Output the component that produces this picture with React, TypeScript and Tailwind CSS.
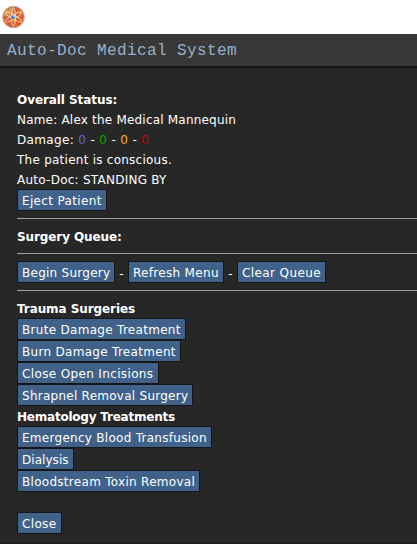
const trauma = [
  { label: "Brute Damage Treatment", size: "w-[169px] tracking-[0.3px]" },
  { label: "Burn Damage Treatment", size: "w-[164px] tracking-[0.3px]" },
  { label: "Close Open Incisions", size: "w-[142px] tracking-[0.36px]" },
  { label: "Shrapnel Removal Surgery", size: "w-[176px] tracking-[0.26px]" },
];

const hematology = [
  { label: "Emergency Blood Transfusion", size: "w-[195px] tracking-[0.28px]" },
  { label: "Dialysis", size: "w-[57px] tracking-[0.05px]" },
  { label: "Bloodstream Toxin Removal", size: "w-[183px] tracking-[0.29px]" },
];

const LinkButton = ({ label, size }: { label: string; size: string }) => (
  <button
    className={`${size} block h-[22px] shrink-0 whitespace-nowrap border border-[#161616] bg-[#40628a] pl-1 text-left leading-[22px] text-white`}
  >
    <span className="block h-5">{label}</span>
  </button>
);

const Logo = () => (
  <svg className="h-6 w-6" viewBox="0 0 24 24" fill="none">
    <circle cx="11.5" cy="12" r="10.8" fill="#d8602e" stroke="#c3b4aa" strokeWidth="1" />
    <path d="M1.6 11A10 10 0 0 1 11.5 2V12Z" fill="#d3935a" />
    <g stroke="#f3d3c0" strokeWidth="0.9">
      <ellipse cx="11.5" cy="12" rx="2" ry="9.2" />
      <ellipse cx="11.5" cy="12" rx="2" ry="9.2" transform="rotate(60 11.5 12)" />
      <ellipse cx="11.5" cy="12" rx="2" ry="9.2" transform="rotate(120 11.5 12)" />
    </g>
    <circle cx="11" cy="12.3" r="2" fill="#3f7fdc" />
    <circle cx="12.3" cy="11" r="1.1" fill="#d9ecff" />
    <circle cx="4.5" cy="7.3" r="1.2" fill="#f3cf22" />
    <circle cx="18.8" cy="7.5" r="1.2" fill="#f3cf22" />
    <circle cx="12.8" cy="15.7" r="1.2" fill="#f3cf22" />
  </svg>
);

const App = () => {
  return (
    <div className="flex h-[544px] w-[417px] flex-col overflow-hidden border-b border-[#241c1e] bg-[#272727] font-['DejaVu_Sans',sans-serif] text-xs leading-[22px] text-white">
      <div className="h-[34px] shrink-0 bg-white pl-0.5 pt-[5px]">
        <Logo />
      </div>
      <header className="h-[34px] shrink-0 border-b-2 border-[#161616] bg-[#383838] pl-[7px]">
        <h1 className="whitespace-nowrap font-['Courier_New','Liberation_Mono',monospace] text-base leading-[34px] tracking-[0.4px] text-[#98b0c8]">
          Auto-Doc Medical System
        </h1>
      </header>
      <main className="pl-[17px] pt-[21px]">
        <h2 className="h-5 font-bold tracking-[-0.07px]">Overall Status:</h2>
        <p className="h-5 tracking-[0.2px]">Name: Alex the Medical Mannequin</p>
        <p className="h-5 tracking-[0.35px]">
          Damage: <span className="text-[#6666cc]">0</span> - <span className="text-[#00aa00]">0</span> -{" "}
          <span className="text-[#ffb020]">0</span> - <span className="text-[#cc0000]">0</span>
        </p>
        <p className="h-5 tracking-[0.25px]">The patient is conscious.</p>
        <p className="h-5 tracking-[0.25px]">Auto-Doc: STANDING BY</p>
        <LinkButton label="Eject Patient" size="w-[90px] tracking-[0.35px]" />
        <hr className="mt-[7px] border-[#a0a0a0]" />
        <h2 className="mt-[7px] h-5 font-bold tracking-[-0.1px]">Surgery Queue:</h2>
        <hr className="mt-[7px] border-[#a0a0a0]" />
        <div className="mt-[7px] flex">
          <LinkButton label="Begin Surgery" size="w-[98px] tracking-[0.26px]" />
          <span className="h-[22px] w-[13px] text-center leading-[26px]">-</span>
          <LinkButton label="Refresh Menu" size="w-[96px] tracking-[0.31px]" />
          <span className="h-[22px] w-[13px] text-center leading-[26px]">-</span>
          <LinkButton label="Clear Queue" size="w-[89px] tracking-[0.4px]" />
        </div>
        <hr className="mt-[7px] border-[#a0a0a0]" />
        <h2 className="mt-[7px] h-5 font-bold tracking-[-0.08px]">Trauma Surgeries</h2>
        {trauma.map((item) => (
          <LinkButton key={item.label} {...item} />
        ))}
        <h2 className="h-5 font-bold tracking-[-0.22px]">Hematology Treatments</h2>
        {hematology.map((item) => (
          <LinkButton key={item.label} {...item} />
        ))}
        <div className="mt-5">
          <LinkButton label="Close" size="w-[45px] tracking-[0.35px]" />
        </div>
      </main>
    </div>
  );
};

export default App;
